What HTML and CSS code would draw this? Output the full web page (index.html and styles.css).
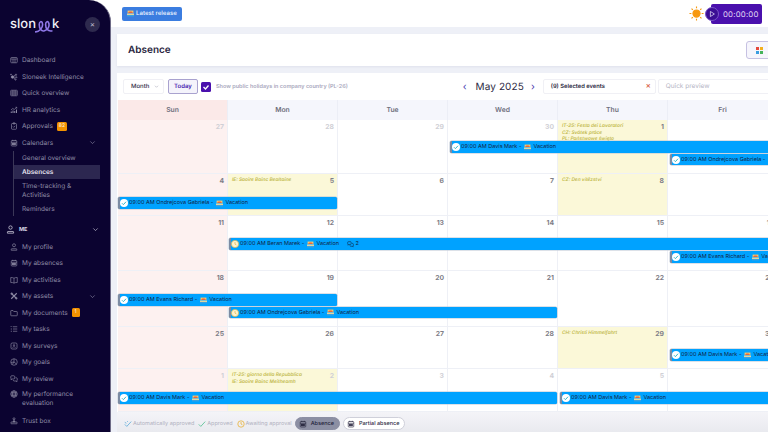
FILE: index.html
```html
<!DOCTYPE html>
<html lang="en">
<head>
    <meta charset="UTF-8">
    <meta name="viewport" content="width=device-width, initial-scale=1.0">
    <title>Absence</title>
    <link rel="stylesheet" href="styles.css">
</head>
<body>
    <svg class="sprite" xmlns="http://www.w3.org/2000/svg">
        <symbol id="i-dash" viewBox="0 0 16 16"><rect x="1.5" y="3" width="13" height="10.5" rx="1.5"/><path d="M1.5 6h13M6 6v7.500M10 6v7.500"/></symbol>
        <symbol id="i-ai" viewBox="0 0 16 16"><circle cx="5" cy="8" r="2.500" fill="currentColor"/><circle cx="12" cy="3.500" r="1.300"/><circle cx="13" cy="8.500" r="1"/><circle cx="11" cy="13" r="1.300"/><circle cx="2" cy="3" r="1"/><path d="M7 6.500l4-2.500M7.500 8.300h4.500M7 10l3 2"/></symbol>
        <symbol id="i-grid" viewBox="0 0 16 16"><rect x="1.500" y="2.500" width="13" height="11" rx="1"/><path d="M1.500 6h13M1.500 10h13M5.800 2.500v11M10.200 2.500v11"/></symbol>
        <symbol id="i-chart" viewBox="0 0 16 16"><path d="M2 8l3.500-3 3 2 5-4.500M11 2.500h2.500V5"/><path d="M2.500 14v-3M6 14V9M9.500 14v-4M13 14V7" stroke-width="2"/></symbol>
        <symbol id="i-clip" viewBox="0 0 16 16"><rect x="3" y="3" width="10" height="11.500" rx="1.500"/><rect x="6" y="1.500" width="4" height="2.500" rx=".8"/><path d="M5.800 9l1.600 1.600 3-3"/></symbol>
        <symbol id="i-cal" viewBox="0 0 16 16"><rect x="2.500" y="3" width="11" height="11" rx="1.500"/><path d="M2.500 6.500h11M5.500 1.500V4M10.500 1.500V4"/><rect x="5" y="8.500" width="6" height="3" fill="currentColor"/></symbol>
        <symbol id="i-user" viewBox="0 0 16 16"><circle cx="8" cy="4.500" r="3"/><path d="M3.500 11.500h9a1 1 0 0 1 1 1v2h-11v-2a1 1 0 0 1 1-1z"/></symbol>
        <symbol id="i-book" viewBox="0 0 16 16"><path d="M8 4.500C6.500 3.300 4 3 1.500 3v10c2.500 0 5 .2 6.500 1.300 1.500-1.100 4-1.300 6.500-1.300V3C12 3 9.500 3.300 8 4.500zM8 4.500v9.800"/></symbol>
        <symbol id="i-tools" viewBox="0 0 16 16"><path d="M2.500 2.500l11 11M13.500 2.500l-11 11" stroke-width="2.200"/><circle cx="3.500" cy="3.500" r="1.800"/><circle cx="12.500" cy="12.500" r="1.800"/></symbol>
        <symbol id="i-folder" viewBox="0 0 16 16"><path d="M1.500 4a1 1 0 0 1 1-1h3.500l1.500 2h6a1 1 0 0 1 1 1v6.500a1 1 0 0 1-1 1h-11a1 1 0 0 1-1-1z"/></symbol>
        <symbol id="i-list" viewBox="0 0 16 16"><path d="M6 3.500h8.500M6 8h8.500M6 12.500h8.500M1.500 3l1 1 1.500-1.500M1.500 8h2.500M1.500 12.500h2.500"/></symbol>
        <symbol id="i-face" viewBox="0 0 16 16"><rect x="2" y="2" width="12" height="12" rx="2.500"/><path d="M5 11c1.500-2 4.500-2 6 0"/><circle cx="8" cy="6.500" r="1.300"/></symbol>
        <symbol id="i-pie" viewBox="0 0 16 16"><circle cx="8" cy="8" r="6.500"/><path d="M8 1.500V8l5 4M8 8l-6 1M8 8l-3.500 5"/></symbol>
        <symbol id="i-chat" viewBox="0 0 16 16"><path d="M1.500 3.500a2 2 0 0 1 2-2h4a2 2 0 0 1 2 2v2.500a2 2 0 0 1-2 2H4l-2 1.500.3-2.100a2 2 0 0 1-.8-1.400z"/><path d="M11 5.500h1.500a2 2 0 0 1 2 2v2.500a2 2 0 0 1-.8 1.400l.3 2.100-2-1.500H8.500a2 2 0 0 1-2-2"/></symbol>
        <symbol id="i-globe" viewBox="0 0 16 16"><circle cx="8" cy="8" r="6.500"/><ellipse cx="8" cy="8" rx="3" ry="6.500"/><path d="M1.500 8h13M2.500 4.800h11M2.500 11.200h11"/></symbol>
        <symbol id="i-trust" viewBox="0 0 16 16"><circle cx="8" cy="3.500" r="2"/><path d="M8 5.500v4M5.500 9.500h5" stroke-width="2"/><rect x="2" y="10" width="12" height="3.500" rx=".5"/></symbol>
        <symbol id="i-chev" viewBox="0 0 16 16"><path d="M3 5.500l5 5 5-5"/></symbol>
        <symbol id="i-beach" viewBox="0 0 12 12"><rect x="1" y="1" width="10" height="4" fill="#f6c66b" stroke="none"/><path d="M2 5c1-3 7-3 8 0z" fill="#e8663d" stroke="none"/><rect x="0" y="6" width="12" height="2.500" fill="#f3dc9a" stroke="none"/><rect x="0" y="8.500" width="12" height="2.500" fill="#3aa0e0" stroke="none"/></symbol>
        <symbol id="i-ok" viewBox="0 0 16 16"><circle cx="8" cy="8" r="8" fill="#fff"/><path d="M4 8.500l2.800 2.800L12 5.500" fill="none" stroke="#35b7c9" stroke-width="2"/></symbol>
        <symbol id="i-wait" viewBox="0 0 16 16"><circle cx="8" cy="8" r="7.200" fill="#fdf3cf" stroke="#e3b64c" stroke-width="1.400"/><path d="M8 4v4.300l2.800 1.500" fill="none" stroke="#e3b64c" stroke-width="1.400"/></symbol>
    </svg>

    <div class="app">
        <aside class="sidebar">
            <div class="brand">
                <div class="logo">slon<svg class="logo-loops" viewBox="0 0 34 24"><path d="M0 22C8 23 16 14 14 6 13 1 8 2 8 8 8 16 12 22 18 20 24 18 28 12 26 6 25 1 20 2 20 8 20 16 24 22 33 20"/></svg>k</div>
                <button class="close-btn">×</button>
            </div>
            <nav class="nav">
                <a class="nav-item"><svg class="ico"><use href="#i-dash"/></svg>Dashboard</a>
                <a class="nav-item"><svg class="ico"><use href="#i-ai"/></svg>Sloneek Intelligence</a>
                <a class="nav-item"><svg class="ico"><use href="#i-grid"/></svg>Quick overview</a>
                <a class="nav-item"><svg class="ico"><use href="#i-chart"/></svg>HR analytics</a>
                <a class="nav-item"><svg class="ico"><use href="#i-clip"/></svg>Approvals<span class="badge">82</span></a>
                <a class="nav-item"><svg class="ico"><use href="#i-cal"/></svg>Calendars<svg class="chev"><use href="#i-chev"/></svg></a>
                <div class="subnav">
                    <a class="sub-item">General overview</a>
                    <a class="sub-item active">Absences</a>
                    <a class="sub-item tall">Time-tracking &amp; Activities</a>
                    <a class="sub-item">Reminders</a>
                </div>
                <a class="nav-head"><svg class="ico"><use href="#i-user"/></svg>ME<svg class="chev"><use href="#i-chev"/></svg></a>
                <a class="nav-item"><svg class="ico"><use href="#i-user"/></svg>My profile</a>
                <a class="nav-item"><svg class="ico"><use href="#i-cal"/></svg>My absences</a>
                <a class="nav-item"><svg class="ico"><use href="#i-book"/></svg>My activities</a>
                <a class="nav-item"><svg class="ico"><use href="#i-tools"/></svg>My assets<svg class="chev"><use href="#i-chev"/></svg></a>
                <a class="nav-item"><svg class="ico"><use href="#i-folder"/></svg>My documents<span class="badge">1</span></a>
                <a class="nav-item"><svg class="ico"><use href="#i-list"/></svg>My tasks</a>
                <a class="nav-item"><svg class="ico"><use href="#i-face"/></svg>My surveys</a>
                <a class="nav-item"><svg class="ico"><use href="#i-pie"/></svg>My goals</a>
                <a class="nav-item"><svg class="ico"><use href="#i-chat"/></svg>My review</a>
                <a class="nav-item tall"><svg class="ico"><use href="#i-globe"/></svg>My performance evaluation</a>
                <a class="nav-item"><svg class="ico"><use href="#i-trust"/></svg>Trust box</a>
            </nav>
        </aside>

        <main class="main">
            <header class="topbar">
                <button class="release-btn"><svg class="emoji"><use href="#i-beach"/></svg>Latest release</button>
                <div class="topbar-right">
                    <svg class="sun" viewBox="0 0 16 16"><circle cx="8" cy="8" r="3.800"/><path d="M8 .5v2M8 13.500v2M.5 8h2M13.500 8h2M2.700 2.700l1.400 1.400M11.900 11.900l1.400 1.400M2.700 13.300l1.400-1.400M11.900 4.100l1.400-1.400"/></svg>
                    <div class="timer">
                        <span class="play"><svg viewBox="0 0 10 10"><path d="M3 1.800l5 3.200-5 3.200z"/></svg></span>
                        00:00:00
                    </div>
                </div>
            </header>

            <section class="title-card">
                <h1>Absence</h1>
                <button class="apps-btn"><span class="apps"><i></i><i></i><i></i><i></i></span></button>
            </section>

            <section class="calendar">
                <div class="toolbar">
                    <div class="select">Month<svg class="chev"><use href="#i-chev"/></svg></div>
                    <button class="today">Today</button>
                    <span class="check"><svg viewBox="0 0 10 10"><path d="M2.500 5l2 2 3-3.500"/></svg></span>
                    <span class="check-label">Show public holidays in company country (PL-26)</span>
                    <div class="month-nav">
                        <span class="arrow">‹</span>
                        <span class="month">May 2025</span>
                        <span class="arrow">›</span>
                    </div>
                    <div class="selected">(9) Selected events<span class="clear">✕</span></div>
                    <div class="preview">Quick preview</div>
                </div>

                <div class="head-row">
                    <div class="head sun-col">Sun</div>
                    <div class="head">Mon</div>
                    <div class="head">Tue</div>
                    <div class="head">Wed</div>
                    <div class="head">Thu</div>
                    <div class="head">Fri</div>
                    <div class="head">Sat</div>
                </div>

                <div class="week w1">
                    <div class="day sunday off"><b>27</b></div>
                    <div class="day off"><b>28</b></div>
                    <div class="day off"><b>29</b></div>
                    <div class="day off"><b>30</b></div>
                    <div class="day holiday"><b>1</b><p>IT-25: Festa dei Lavoratori</p><p>CZ: Svátek práce</p><p>PL: Państwowe święto</p></div>
                    <div class="day"><b>2</b></div>
                    <div class="day"><b>3</b></div>
                    <div class="event c4-8 r2"><svg class="state"><use href="#i-ok"/></svg>09:00 AM Davis Mark - <svg class="emoji"><use href="#i-beach"/></svg> Vacation</div>
                    <div class="event c6-8 r3"><svg class="state"><use href="#i-ok"/></svg>09:00 AM Ondrejcova Gabriela - <svg class="emoji"><use href="#i-beach"/></svg> Vacation</div>
                </div>

                <div class="week w2">
                    <div class="day sunday"><b>4</b></div>
                    <div class="day holiday"><b>5</b><p>IE: Saoire Bainc Bealtaine</p></div>
                    <div class="day"><b>6</b></div>
                    <div class="day"><b>7</b></div>
                    <div class="day holiday"><b>8</b><p>CZ: Den vítězství</p></div>
                    <div class="day"><b>9</b></div>
                    <div class="day"><b>10</b></div>
                    <div class="event c1-3 r2"><svg class="state"><use href="#i-ok"/></svg>09:00 AM Ondrejcova Gabriela - <svg class="emoji"><use href="#i-beach"/></svg> Vacation</div>
                </div>

                <div class="week w3">
                    <div class="day sunday"><b>11</b></div>
                    <div class="day"><b>12</b></div>
                    <div class="day"><b>13</b></div>
                    <div class="day"><b>14</b></div>
                    <div class="day"><b>15</b></div>
                    <div class="day"><b>16</b></div>
                    <div class="day"><b>17</b></div>
                    <div class="event c2-8 r2"><svg class="state"><use href="#i-wait"/></svg>09:00 AM Beran Marek - <svg class="emoji"><use href="#i-beach"/></svg> Vacation<svg class="comment"><use href="#i-chat"/></svg>2</div>
                    <div class="event c6-8 r3"><svg class="state"><use href="#i-ok"/></svg>09:00 AM Evans Richard - <svg class="emoji"><use href="#i-beach"/></svg> Vacation</div>
                </div>

                <div class="week w4">
                    <div class="day sunday"><b>18</b></div>
                    <div class="day"><b>19</b></div>
                    <div class="day"><b>20</b></div>
                    <div class="day"><b>21</b></div>
                    <div class="day"><b>22</b></div>
                    <div class="day"><b>23</b></div>
                    <div class="day"><b>24</b></div>
                    <div class="event c1-3 r2"><svg class="state"><use href="#i-ok"/></svg>09:00 AM Evans Richard - <svg class="emoji"><use href="#i-beach"/></svg> Vacation</div>
                    <div class="event c2-5 r3"><svg class="state"><use href="#i-wait"/></svg>09:00 AM Ondrejcova Gabriela - <svg class="emoji"><use href="#i-beach"/></svg> Vacation</div>
                </div>

                <div class="week w5">
                    <div class="day sunday"><b>25</b></div>
                    <div class="day"><b>26</b></div>
                    <div class="day"><b>27</b></div>
                    <div class="day"><b>28</b></div>
                    <div class="day holiday"><b>29</b><p>CH: Christi Himmelfahrt</p></div>
                    <div class="day"><b>30</b></div>
                    <div class="day"><b>31</b></div>
                    <div class="event c6-8 r2"><svg class="state"><use href="#i-ok"/></svg>09:00 AM Davis Mark - <svg class="emoji"><use href="#i-beach"/></svg> Vacation</div>
                </div>

                <div class="week w6">
                    <div class="day sunday off"><b>1</b></div>
                    <div class="day holiday off"><b>2</b><p>IT-25: giorno della Repubblica</p><p>IE: Saoire Bainc Meitheamh</p></div>
                    <div class="day off"><b>3</b></div>
                    <div class="day off"><b>4</b></div>
                    <div class="day off"><b>5</b></div>
                    <div class="day off"><b>6</b></div>
                    <div class="day off"><b>7</b></div>
                    <div class="event c1-5 r2"><svg class="state"><use href="#i-ok"/></svg>09:00 AM Davis Mark - <svg class="emoji"><use href="#i-beach"/></svg> Vacation</div>
                    <div class="event c5-8 r2"><svg class="state"><use href="#i-ok"/></svg>09:00 AM Davis Mark - <svg class="emoji"><use href="#i-beach"/></svg> Vacation</div>
                </div>
            </section>

            <footer class="legend">
                <span class="legend-item"><svg class="legend-ico auto" viewBox="0 0 10 10"><path d="M1 5.500l2.500 2.500L9 2M1 3l2 1M4 1.500l1 1"/></svg>Automatically approved</span>
                <span class="legend-item"><svg class="legend-ico ok" viewBox="0 0 10 10"><path d="M1 5.500l2.500 2.500L9 2"/></svg>Approved</span>
                <span class="legend-item"><svg class="legend-ico clock" viewBox="0 0 10 10"><circle cx="5" cy="5" r="4"/><path d="M5 2.500V5l1.800 1"/></svg>Awaiting approval</span>
                <span class="pill on"><svg class="ico"><use href="#i-cal"/></svg>Absence</span>
                <span class="pill"><svg class="ico"><use href="#i-cal"/></svg>Partial absence</span>
            </footer>
        </main>
    </div>
</body>
</html>
```

FILE: styles.css
```css
* {
    box-sizing: border-box;
}

html, body {
    margin: 0;
    height: 432px;
    overflow: hidden;
    background: #fff;
    font-family: Inter, "Liberation Sans", sans-serif;
    text-rendering: geometricPrecision;
}

.sprite {
    display: none;
}

button {
    font-family: inherit;
    text-rendering: inherit;
    cursor: pointer;
}

.app {
    display: flex;
    height: 432px;
}

/* sidebar */
.sidebar {
    width: 111px;
    flex: none;
    background: #0b0330;
    border-right: 1px solid #6d6a86;
    border-top-right-radius: 22px;
    color: #8f8ca6;
}

.brand {
    height: 52px;
    display: flex;
    align-items: flex-start;
    justify-content: space-between;
    padding: 16px 10px 0 10px;
}

.logo {
    display: flex;
    align-items: center;
    color: #f2f1f7;
    font-size: 13px;
    font-weight: 500;
    line-height: 17px;
}

.logo-loops {
    width: 18px;
    height: 13px;
    margin: 4px -1px 0 -1px;
    fill: none;
    stroke: #8f78e8;
    stroke-width: 3;
}

.close-btn {
    width: 15px;
    height: 15px;
    margin-top: 1px;
    padding: 0;
    border: none;
    border-radius: 50%;
    background: #2e2a4e;
    color: #b9b7c9;
    font-size: 8px;
    line-height: 15px;
}

.nav {
    display: flex;
    flex-direction: column;
}

.ico {
    width: 8px;
    height: 8px;
    flex: none;
    fill: none;
    stroke: currentColor;
    stroke-width: 1.300;
}

.chev {
    width: 7px;
    height: 7px;
    flex: none;
    fill: none;
    stroke: currentColor;
    stroke-width: 1.400;
}

.nav-item {
    display: flex;
    align-items: center;
    gap: 4px;
    height: 16.500px;
    padding: 0 14px 0 10px;
    font-size: 6.500px;
    white-space: nowrap;
}

.nav-item .chev {
    margin-left: auto;
}

.nav-item.tall {
    height: 25.500px;
    white-space: normal;
    line-height: 9px;
    padding-right: 20px;
    align-items: flex-start;
    padding-top: 3px;
}

.badge {
    min-width: 8px;
    height: 9px;
    padding: 0 2px;
    border-radius: 1.500px;
    background: #f39200;
    color: #fff6e0;
    font-size: 5px;
    line-height: 9px;
    text-align: center;
}

.subnav {
    display: flex;
    flex-direction: column;
    height: 65.250px;
    margin: 0 10px 0 13px;
    border-left: 1px solid #3b3758;
}

.sub-item {
    display: flex;
    align-items: center;
    height: 14px;
    padding-left: 8px;
    font-size: 6.500px;
}

.sub-item.tall {
    height: 23.250px;
    line-height: 9px;
    padding-right: 14px;
}

.sub-item.active {
    background: #2c2750;
    color: #e6e4ef;
    font-weight: 600;
}

.nav-head {
    display: flex;
    align-items: center;
    gap: 4px;
    height: 17px;
    margin-top: 5px;
    padding: 0 11px 0 6px;
    color: #d9d7e4;
    font-size: 5.500px;
    font-weight: 700;
}

.nav-head .ico {
    width: 9px;
    height: 9px;
}

.nav-head .chev {
    margin-left: auto;
}

/* main column */
.main {
    flex: 1;
    min-width: 0;
    display: flex;
    flex-direction: column;
    overflow: hidden;
    background: #eef0f7;
}

.topbar {
    height: 27px;
    flex: none;
    display: flex;
    align-items: center;
    justify-content: space-between;
    padding: 0 6px 0 11px;
    background: #fff;
}

.release-btn {
    display: flex;
    align-items: center;
    gap: 2px;
    height: 14px;
    padding: 0 5px;
    border: none;
    border-radius: 2px;
    background: #3b7de0;
    color: #eef4ff;
    font-size: 6.100px;
    font-weight: 500;
}

.emoji {
    display: inline-block;
    width: 7px;
    height: 7px;
    vertical-align: -1px;
}

.topbar-right {
    display: flex;
    align-items: center;
    gap: 1px;
}

.sun {
    width: 15px;
    height: 15px;
    fill: #f7980f;
    stroke: #f7980f;
    stroke-width: 1.200;
}

.timer {
    position: relative;
    width: 51px;
    height: 20px;
    margin-left: 6px;
    padding-left: 12px;
    border-radius: 2px;
    background: #4a10ad;
    color: #e3dcf5;
    font-size: 7.800px;
    line-height: 20px;
    letter-spacing: .2px;
}

.play {
    position: absolute;
    left: -6px;
    top: 3px;
    width: 14px;
    height: 14px;
    display: flex;
    align-items: center;
    justify-content: center;
    border: 1px solid #7a55c9;
    border-radius: 50%;
    background: #3a0d94;
}

.play svg {
    width: 8px;
    height: 8px;
    fill: none;
    stroke: #d8cff0;
    stroke-width: 1;
}

.title-card {
    height: 32px;
    flex: none;
    display: flex;
    align-items: center;
    justify-content: space-between;
    margin: 7px 0 7px 6px;
    padding-left: 11px;
    background: #fff;
    box-shadow: 0 1px 2px rgba(60, 60, 110, .08);
}

.title-card h1 {
    margin: 0;
    color: #2b2741;
    font-size: 10px;
    font-weight: 600;
}

.apps-btn {
    display: flex;
    align-items: center;
    width: 30px;
    height: 18px;
    margin-right: -8px;
    padding: 0 0 0 9px;
    border: 1px solid #c6c1e2;
    border-radius: 3px;
    background: #f6f5fc;
}

.apps {
    display: grid;
    grid-template-columns: 3px 3px;
    gap: 1px;
}

.apps i {
    height: 3px;
    background: #e5483d;
}

.apps i:nth-child(2) {
    background: #f2b01e;
}

.apps i:nth-child(3) {
    background: #3a9de0;
}

.apps i:nth-child(4) {
    background: #45b45a;
}

/* calendar */
.calendar {
    flex: none;
    margin-left: 6px;
    background: #fff;
}

.toolbar {
    position: relative;
    display: flex;
    align-items: center;
    height: 27px;
    padding-left: 6px;
}

.toolbar > * {
    flex: none;
}

.select {
    display: flex;
    align-items: center;
    justify-content: space-between;
    width: 41px;
    height: 15px;
    padding: 0 4px 0 7px;
    border: 1px solid #f0f0f5;
    border-radius: 2px;
    color: #2e2b44;
    font-size: 6px;
    font-weight: 500;
}

.select .chev {
    width: 5px;
    height: 5px;
    color: #8a8aa0;
}

.today {
    width: 30px;
    height: 15px;
    margin-left: 4px;
    padding: 0;
    border: 1px solid #a9a2cf;
    border-radius: 2px;
    background: #f4f3fb;
    color: #4a1fb0;
    font-size: 6px;
    font-weight: 600;
}

.check {
    width: 10px;
    height: 10px;
    margin-left: 3px;
    border-radius: 1.500px;
    background: #4a10ad;
}

.check svg {
    display: block;
    fill: none;
    stroke: #fff;
    stroke-width: 1.300;
}

.check-label {
    margin-left: 5px;
    color: #a9a8bd;
    font-size: 5.500px;
    font-weight: 600;
    white-space: nowrap;
}

.month-nav {
    display: flex;
    align-items: center;
    margin-left: 115px;
    color: #2e2b44;
    white-space: nowrap;
}

.arrow {
    color: #4a3ab0;
    font-size: 10px;
    line-height: 12px;
}

.month {
    margin: 0 7px 0 9px;
    font-size: 10px;
    letter-spacing: .1px;
}

.selected {
    display: flex;
    align-items: center;
    justify-content: space-between;
    width: 113px;
    height: 15px;
    margin-left: 8px;
    padding: 0 4px 0 7px;
    border: 1px solid #f0f0f5;
    border-radius: 2px;
    color: #2e2b44;
    font-size: 5.800px;
    font-weight: 600;
}

.clear {
    color: #d9654a;
    font-size: 6px;
}

.preview {
    width: 130px;
    height: 15px;
    margin-left: 2px;
    padding-left: 7px;
    border: 1px solid #f0f0f5;
    border-radius: 2px;
    color: #b4b4c4;
    font-size: 6.500px;
    line-height: 13px;
}

.head-row {
    display: grid;
    grid-template-columns: repeat(7, 110px);
    height: 20px;
    margin-left: 1px;
    background: #f5f6fc;
}

.head {
    border-right: 1px solid #eceef6;
    color: #6f6f7d;
    font-size: 6.800px;
    font-weight: 600;
    line-height: 20px;
    text-align: center;
}

.sun-col {
    background: #fbe9e8;
}

.week {
    display: grid;
    grid-template-columns: repeat(7, 110px);
    row-gap: 1px;
    margin-left: 1px;
}

.w1 {
    height: 54px;
    grid-template-rows: 20px 12px 11px 1fr;
}

.w2 {
    height: 42px;
    grid-template-rows: 22px 12px 1fr;
}

.w3 {
    height: 55px;
    grid-template-rows: 21px 12px 12px 1fr;
}

.w4 {
    height: 56px;
    grid-template-rows: 22px 12px 11px 1fr;
}

.w5 {
    height: 42px;
    grid-template-rows: 21px 12px 1fr;
}

.w6 {
    height: 43px;
    grid-template-rows: 22px 12px 1fr;
}

.day {
    grid-row: 1 / -1;
    min-width: 0;
    overflow: hidden;
    padding: 1px 3px 0 4px;
    border-right: 1px solid #eef0f6;
    border-bottom: 1px solid #eef0f6;
    background: #fff;
}

.day:nth-child(1) { grid-column: 1; }
.day:nth-child(2) { grid-column: 2; }
.day:nth-child(3) { grid-column: 3; }
.day:nth-child(4) { grid-column: 4; }
.day:nth-child(5) { grid-column: 5; }
.day:nth-child(6) { grid-column: 6; }
.day:nth-child(7) { grid-column: 7; }

.day b {
    float: right;
    color: #7f7f88;
    font-size: 6.800px;
    font-weight: 700;
    line-height: 11px;
}

.day.off b {
    color: #d0d0d6;
}

.day p {
    margin: 0;
    padding-top: 1.100px;
    color: #c2b84c;
    font-size: 4.800px;
    font-style: italic;
    font-weight: 600;
    line-height: 5.600px;
    white-space: nowrap;
}

.day b + p {
    margin-top: 2px;
}

.sunday {
    background: #fdf1f0;
}

.holiday {
    background: #fbf8d8;
}

.event {
    display: flex;
    align-items: center;
    min-width: 0;
    overflow: hidden;
    margin: 0 1px 0 2px;
    border-left: 2px solid #7c8ba3;
    border-radius: 1.500px;
    background: #00a2ff;
    box-shadow: 0 0 0 .5px #b9c4d2;
    color: #12233f;
    font-size: 5.500px;
    white-space: pre;
}

.event .emoji {
    margin: 0 1px;
}

.r2 { grid-row: 2; }
.r3 { grid-row: 3; }

.c1-3 { grid-column: 1 / 3; margin-left: 0; }
.c1-5 { grid-column: 1 / 5; margin-left: 0; }
.c2-5 { grid-column: 2 / 5; margin-left: 1px; }
.c2-8 { grid-column: 2 / 8; margin-left: 1px; }
.c4-8 { grid-column: 4 / 8; }
.c5-8 { grid-column: 5 / 8; }
.c6-8 { grid-column: 6 / 8; }

.state {
    width: 8px;
    height: 8px;
    flex: none;
    margin-right: 1px;
}

.comment {
    width: 7px;
    height: 7px;
    margin: 0 1.500px 0 8px;
    fill: none;
    stroke: #12233f;
    stroke-width: 1.300;
}

/* legend under the grid */
.legend {
    flex: 1;
    display: flex;
    align-items: center;
    margin-left: 6px;
    padding: 3px 0 0 7px;
    background: linear-gradient(#f4f4f8, #e9eaef);
    color: #b0b1c0;
    font-size: 5.500px;
    white-space: nowrap;
}

.legend-item {
    display: flex;
    align-items: center;
    gap: 1px;
    margin-right: 4px;
}

.legend-item:nth-child(3) {
    margin-right: 3px;
}

.legend-ico {
    width: 8px;
    height: 8px;
    fill: none;
    stroke-width: 1;
}

.legend-ico.auto {
    stroke: #5aa9d8;
}

.legend-ico.ok {
    stroke: #4fbf8f;
}

.legend-ico.clock {
    stroke: #e8b23a;
}

.pill {
    display: flex;
    align-items: center;
    gap: 4px;
    height: 13px;
    margin-right: 3px;
    padding: 0 5px 0 3px;
    border: 1px solid #cfd0da;
    border-radius: 7px;
    background: #fff;
    color: #2e2b44;
    font-weight: 500;
}

.pill.on {
    border-color: #8c8fa3;
    background: #8c8fa3;
    color: #23233a;
}
```
